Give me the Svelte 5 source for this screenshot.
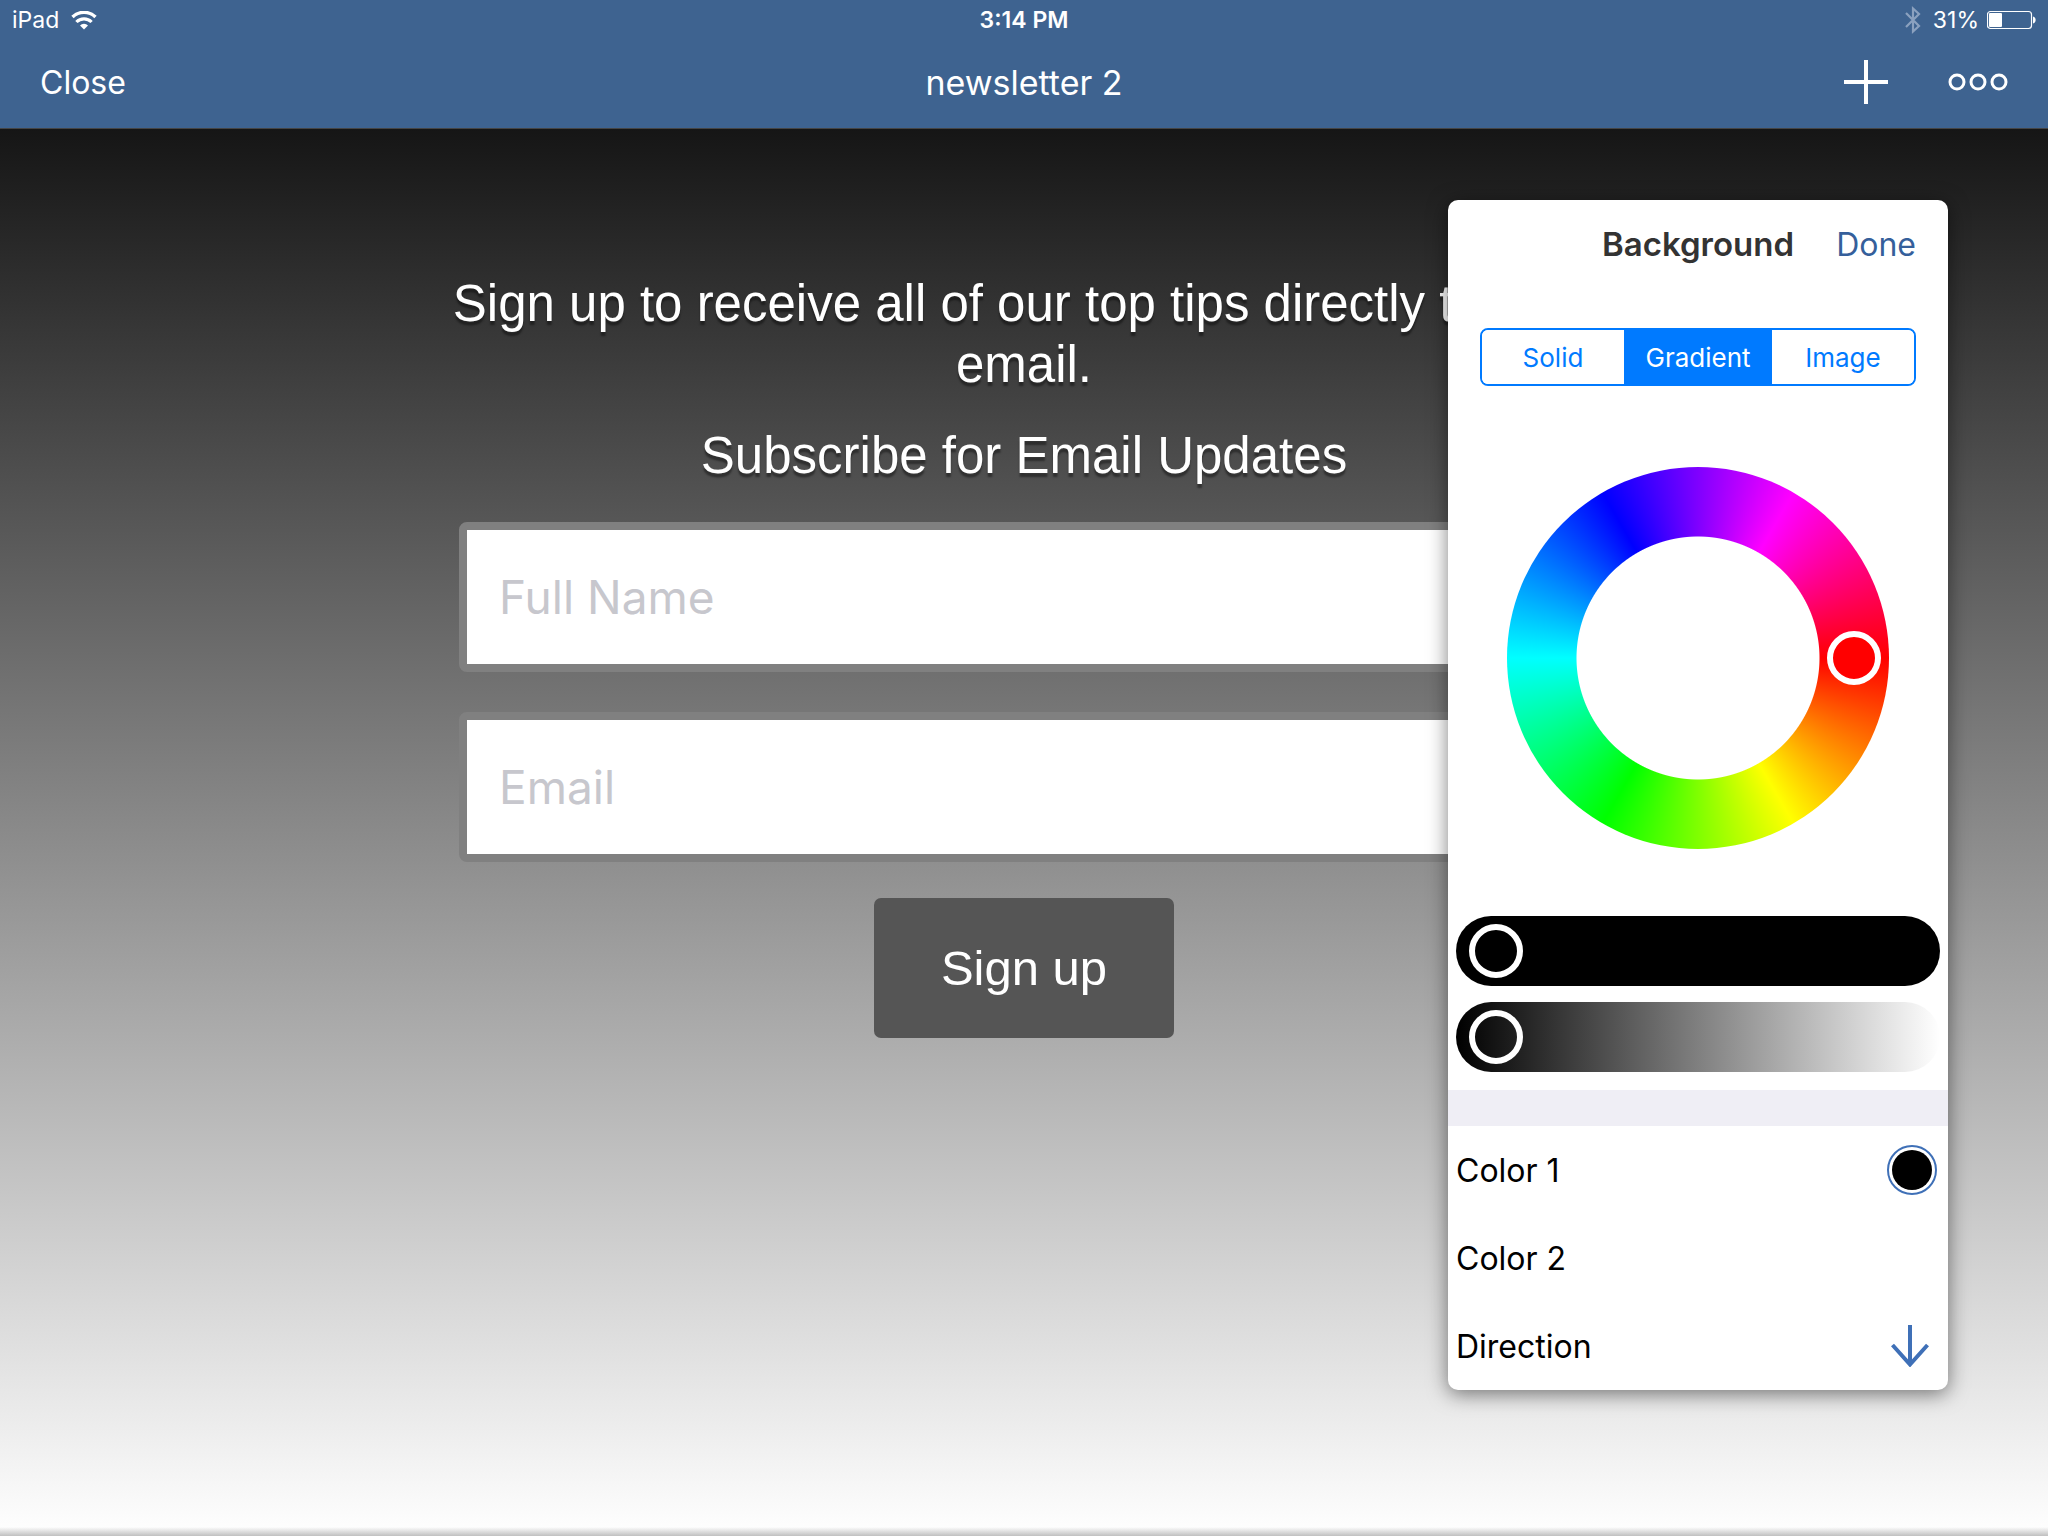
<script>
  let fullName = $state("");
  let email = $state("");
  let mode = $state("Gradient");
  let selected = $state(1);
  let saturation = $state(0);
  let brightness = $state(0);

  const modes = ["Solid", "Gradient", "Image"];
  const swatches = [
    { id: 1, label: "Color 1", color: "#000" },
    { id: 2, label: "Color 2", color: "#fff" },
  ];
</script>

<div class="app">
  <header class="top">
    <div class="status">
      <div class="side">
        <span>iPad</span>
        <svg class="wifi" viewBox="0 0 26 19" width="26" height="19" aria-hidden="true">
          <path d="M1.5 6 A16.5 16.5 0 0 1 24.5 6" fill="none" stroke="#fff" stroke-width="3.4" />
          <path d="M5.4 11 A10.6 10.6 0 0 1 20.6 11" fill="none" stroke="#fff" stroke-width="3.2" />
          <path d="M9 14.4 A5.8 5.8 0 0 1 17 14.4 L13 18.6 Z" fill="#fff" />
        </svg>
      </div>
      <span class="clock">3:14 PM</span>
      <div class="side end">
        <svg class="bluetooth" viewBox="0 0 16 28" width="16" height="28" aria-hidden="true">
          <path d="M1 7 L14 20 L8 25.5 V2.5 L14 8 L1 21" fill="none" stroke="#8ba1bf" stroke-width="2.2" />
        </svg>
        <span>31%</span>
        <svg class="battery" viewBox="0 0 49 20" width="49" height="20" aria-hidden="true">
          <rect x="0.5" y="1.5" width="44" height="17" rx="3" fill="none" stroke="#fff" stroke-width="1.2" />
          <rect x="2" y="3" width="13" height="14" rx="1" fill="#fff" />
          <path d="M46 6.5 C49.5 7 49.5 13 46 13.5 Z" fill="#fff" />
        </svg>
      </div>
    </div>

    <nav class="nav">
      <div class="side">
        <button class="plain close">Close</button>
      </div>
      <h1>newsletter 2</h1>
      <div class="side end actions">
        <button class="plain" aria-label="Add">
          <svg viewBox="0 0 44 44" width="44" height="44">
            <path d="M0 22 H44 M22 0 V44" fill="none" stroke="#fff" stroke-width="4" />
          </svg>
        </button>
        <button class="plain" aria-label="More">
          <svg viewBox="0 0 60 18" width="60" height="18">
            <g fill="none" stroke="#fff" stroke-width="3">
              <circle cx="9" cy="9" r="7" />
              <circle cx="30" cy="9" r="7" />
              <circle cx="51" cy="9" r="7" />
            </g>
          </svg>
        </button>
      </div>
    </nav>
  </header>

  <main class="canvas">
    <p class="text">Sign up to receive all of our top tips directly to your email.</p>
    <h2 class="text">Subscribe for Email Updates</h2>
    <form class="signup" onsubmit={(e) => e.preventDefault()}>
      <input type="text" placeholder="Full Name" aria-label="Full Name" bind:value={fullName} />
      <input type="email" placeholder="Email" aria-label="Email" bind:value={email} />
      <button type="submit">Sign up</button>
    </form>
  </main>

  <aside class="panel">
    <div class="panel-head">
      <h3>Background</h3>
      <button class="plain done">Done</button>
    </div>

    <div class="segments">
      {#each modes as m}
        <button class:active={mode === m} aria-pressed={mode === m} onclick={() => (mode = m)}>{m}</button>
      {/each}
    </div>

    <div class="wheel">
      <button class="knob" aria-label="Hue"></button>
    </div>

    <div class="sliders">
      <input class="saturation" type="range" min="0" max="100" aria-label="Saturation" bind:value={saturation} />
      <input class="brightness" type="range" min="0" max="100" aria-label="Brightness" bind:value={brightness} />
    </div>

    <div class="divider"></div>

    {#each swatches as s}
      <button class="row" onclick={() => (selected = s.id)}>
        <span>{s.label}</span>
        <span class="swatch" class:selected={selected === s.id}>
          <span class="dot" style="background: {s.color}"></span>
        </span>
      </button>
    {/each}
    <button class="row">
      <span>Direction</span>
      <svg class="arrow" viewBox="0 0 38 42" width="38" height="42" aria-hidden="true">
        <path d="M19 0 V39 M1.5 20 L19 39.5 L36.5 20" fill="none" stroke="#3f70b7" stroke-width="4" />
      </svg>
    </button>
  </aside>
</div>

<style>
  :global(body) {
    margin: 0;
  }

  .app {
    position: relative;
    min-height: 100vh;
    font-family: Inter, "Liberation Sans", sans-serif;
    background:
      linear-gradient(to top, rgba(0, 0, 0, 0.25), transparent) bottom / 100% 9px no-repeat,
      linear-gradient(#000, #fff);
  }

  h1, h2, h3, p {
    margin: 0;
    font-weight: 400;
  }

  button {
    border: none;
    padding: 0;
    font: inherit;
    color: inherit;
    cursor: pointer;
  }

  svg {
    display: block;
  }

  .plain {
    background: none;
  }

  /* header */
  .top {
    background: #3e6390;
    border-bottom: 1px solid #444;
    color: #fff;
  }

  .status,
  .nav {
    display: flex;
    align-items: center;
  }

  .status {
    height: 40px;
    padding: 0 12px;
    font-size: 23px;
  }

  .nav {
    height: 84px;
    padding: 0 40px 4px;
  }

  .nav h1 {
    font-size: 34px;
  }

  .close {
    font-size: 32px;
  }

  .side {
    flex: 1;
    display: flex;
    align-items: center;
    gap: 12px;
  }

  .end {
    justify-content: flex-end;
  }

  .status .end {
    gap: 8px;
  }

  .bluetooth {
    margin-right: 4px;
  }

  .clock {
    font-weight: 600;
  }

  .actions {
    gap: 60px;
  }

  /* newsletter form */
  .canvas {
    display: flex;
    flex-direction: column;
    align-items: center;
    padding: 144px 20px 60px;
    color: #fff;
    font-family: "Liberation Sans", Arial, sans-serif;
  }

  .text {
    max-width: 1200px;
    font-size: 51px;
    line-height: 61px;
    text-align: center;
    text-shadow: 0 4px 2px rgba(0, 0, 0, 0.4);
  }

  h2.text {
    margin: 30px 0 36px;
  }

  .signup {
    width: 100%;
    max-width: 1130px;
    display: flex;
    flex-direction: column;
    align-items: center;
  }

  .signup input {
    box-sizing: border-box;
    width: 100%;
    height: 150px;
    margin-bottom: 40px;
    padding: 0 32px;
    border: 8px solid #808080;
    border-radius: 8px;
    background: #fff;
    font-family: Inter, sans-serif;
    font-size: 46px;
    color: #333;
  }

  .signup input::placeholder {
    color: #c7c7cd;
    opacity: 1;
  }

  .signup input:last-of-type {
    margin-bottom: 36px;
  }

  .signup button {
    width: 300px;
    height: 140px;
    border-radius: 7px;
    background: #555;
    font-size: 49px;
  }

  /* background popover */
  .panel {
    position: absolute;
    top: 200px;
    right: 100px;
    width: 500px;
    overflow: hidden;
    border-radius: 10px;
    background: #fff;
    box-shadow: 0 4px 20px rgba(0, 0, 0, 0.5);
    color: #000;
    font-size: 32px;
  }

  .panel-head {
    display: grid;
    grid-template-columns: 1fr auto 1fr;
    align-items: center;
    height: 88px;
    padding: 0 32px;
  }

  .panel-head h3 {
    grid-column: 2;
    font-size: 33px;
    font-weight: 600;
    color: #333;
  }

  .done {
    justify-self: end;
    color: #355f9b;
  }

  .segments {
    display: flex;
    height: 54px;
    margin: 40px 32px 0;
    border: 2px solid #007aff;
    border-radius: 8px;
    overflow: hidden;
  }

  .segments button {
    flex: 1;
    background: #fff;
    color: #007aff;
    font-size: 26px;
  }

  .segments .active {
    flex: 0 0 148px;
    background: #007aff;
    color: #fff;
  }

  .wheel {
    position: relative;
    width: 382px;
    height: 382px;
    margin: 81px auto 67px;
    border-radius: 50%;
    background:
      radial-gradient(circle, #fff 121px, transparent 122px),
      conic-gradient(from 90deg, #f00, #ff0, #0f0, #0ff, #00f, #f0f, #f00);
  }

  .knob {
    position: absolute;
    top: calc(50% - 27px);
    right: 8px;
    width: 54px;
    height: 54px;
    border: 6px solid #fff;
    border-radius: 50%;
    background: #f00;
  }

  .sliders {
    display: flex;
    flex-direction: column;
    gap: 16px;
    padding: 0 8px 18px;
  }

  .sliders input {
    appearance: none;
    box-sizing: border-box;
    width: 100%;
    height: 70px;
    margin: 0;
    padding: 0 13px;
    border-radius: 35px;
    background: #000;
  }

  .sliders .brightness {
    background: linear-gradient(to right, #000, #fff);
  }

  .sliders input::-webkit-slider-thumb {
    appearance: none;
    box-sizing: border-box;
    width: 54px;
    height: 54px;
    border: 6px solid #fff;
    border-radius: 50%;
    background: transparent;
  }

  .divider {
    height: 36px;
    background: #efeef5;
  }

  .row {
    display: flex;
    align-items: center;
    justify-content: space-between;
    width: 100%;
    height: 88px;
    padding: 0 11px 0 8px;
    background: none;
  }

  .swatch {
    box-sizing: border-box;
    width: 50px;
    height: 50px;
    padding: 3px;
    border: 2px solid transparent;
    border-radius: 50%;
  }

  .selected {
    border-color: #3f70b7;
  }

  .dot {
    display: block;
    height: 40px;
    border-radius: 50%;
  }

  .arrow {
    margin-right: 8px;
  }
</style>
